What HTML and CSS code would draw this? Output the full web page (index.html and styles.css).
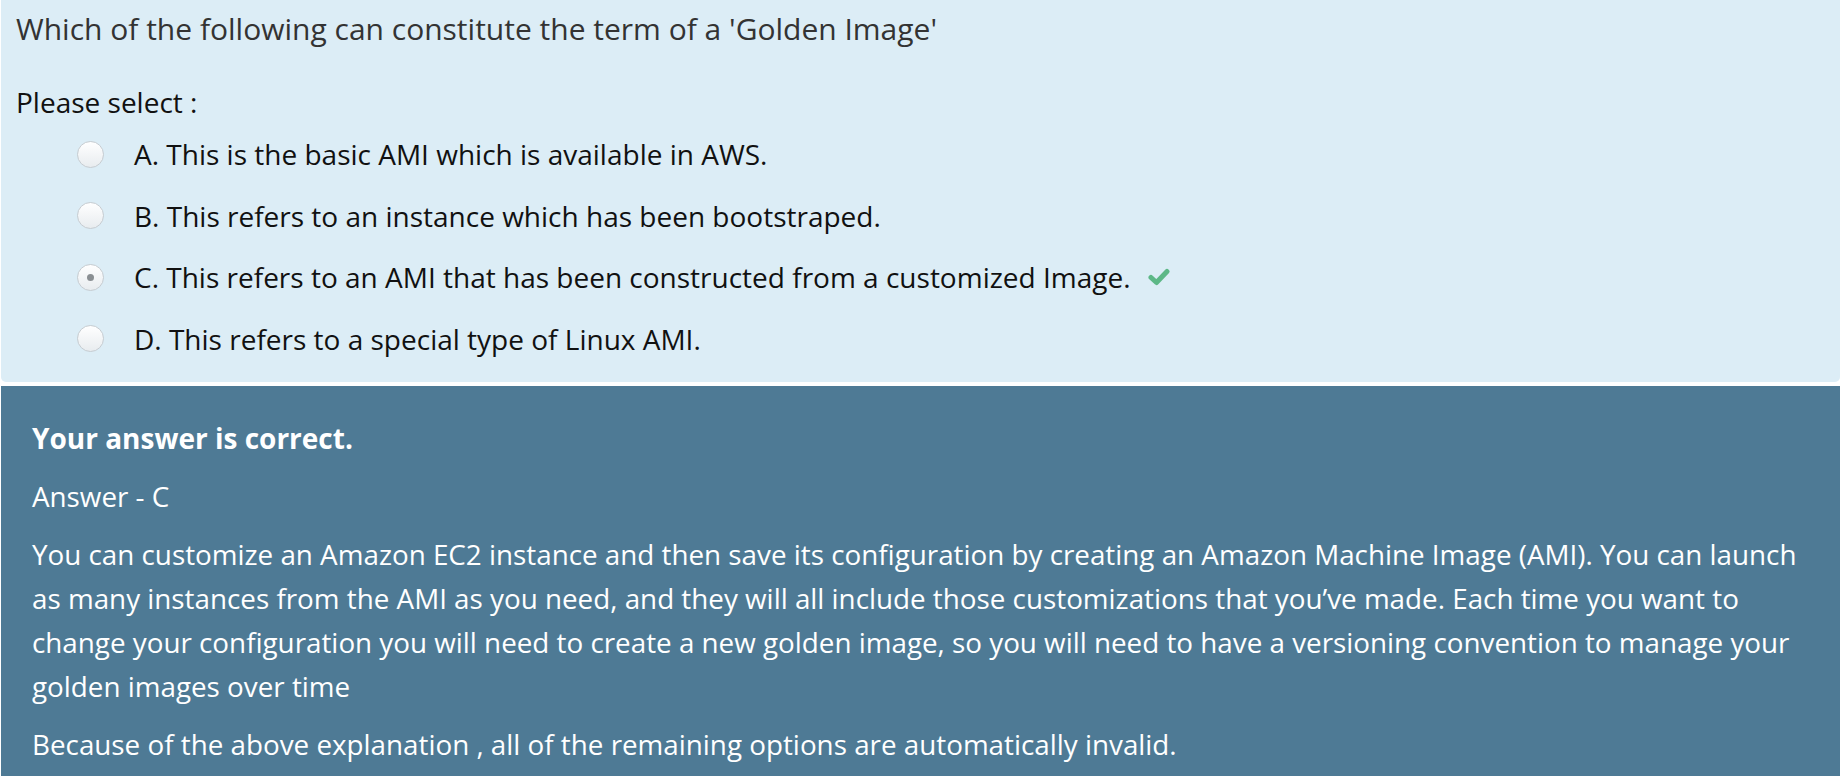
FILE: index.html
```html
<!DOCTYPE html>
<html lang="en">
<head>
<meta charset="utf-8">
<title>Golden Image question</title>
<link rel="stylesheet" href="styles.css">
</head>
<body>
<div class="page">
  <section class="question-panel">
    <p class="q-text">Which of the following can constitute the term of a 'Golden Image'</p>
    <p class="please">Please select :</p>
    <ul class="options">
      <li class="option"><span class="radio"></span><span class="opt-text">A. This is the basic AMI which is available in AWS.</span></li>
      <li class="option"><span class="radio"></span><span class="opt-text">B. This refers to an instance which has been bootstraped.</span></li>
      <li class="option"><span class="radio checked"></span><span class="opt-text">C. This refers to an AMI that has been constructed from a customized Image.</span>
        <svg class="check" viewBox="0 0 22 18" width="22" height="18" aria-hidden="true"><path d="M3 9.5 L8.5 14.5 L19 3.5" fill="none" stroke="#5db887" stroke-width="5" stroke-linecap="round" stroke-linejoin="round"/></svg>
      </li>
      <li class="option"><span class="radio"></span><span class="opt-text">D. This refers to a special type of Linux AMI.</span></li>
    </ul>
  </section>
  <section class="answer-panel">
    <p class="verdict">Your answer is correct.</p>
    <p>Answer - C</p>
    <p>You can customize an Amazon EC2 instance and then save its configuration by creating an Amazon Machine Image (AMI). You can launch as many instances from the AMI as you need, and they will all include those customizations that you’ve made. Each time you want to change your configuration you will need to create a new golden image, so you will need to have a versioning convention to manage your golden images over time</p>
    <p>Because of the above explanation , all of the remaining options are automatically invalid.</p>
  </section>
</div>
</body>
</html>
```
FILE: styles.css
```css
* { box-sizing: border-box; }
html, body { margin: 0; padding: 0; background: #ffffff; }
body {
  font-family: "Open Sans", "Noto Sans", sans-serif;
  font-size: 28px;
  line-height: 44px;
}
.page {
  padding-left: 1px;
  height: 776px;
  overflow: hidden;
}
p { margin: 0; }
.question-panel {
  background: #dcedf6;
  border-radius: 0 0 5px 5px;
  padding: 7px 16px 21px 15px;
  margin-bottom: 4px;
  color: #111;
}
.q-text {
  color: #333;
  font-size: 30px;
  margin-bottom: 29px;
}
.please {
  margin-bottom: 8px;
}
.options {
  list-style: none;
  margin: 0;
  padding: 0 0 0 61px;
  display: flex;
  flex-direction: column;
  gap: 17.5px;
}
.option {
  display: flex;
  align-items: center;
  height: 44px;
}
.radio {
  width: 27px;
  height: 27px;
  border-radius: 50%;
  border: 1px solid #c6ccd1;
  background: linear-gradient(#ffffff, #e8ecef);
  margin-right: 30px;
  flex: none;
  display: flex;
  align-items: center;
  justify-content: center;
}
.radio.checked::after {
  content: "";
  width: 7px;
  height: 7px;
  border-radius: 50%;
  background: #8a8f93;
}
.check {
  margin-left: 17px;
  flex: none;
}
.answer-panel {
  background: #4e7a95;
  color: #ffffff;
  font-size: 27.8px;
  padding: 30px 30px 20px 31px;
  min-height: 400px;
}
.answer-panel p {
  margin-bottom: 14px;
}
.verdict {
  font-weight: 700;
  font-size: 28px;
}
```
